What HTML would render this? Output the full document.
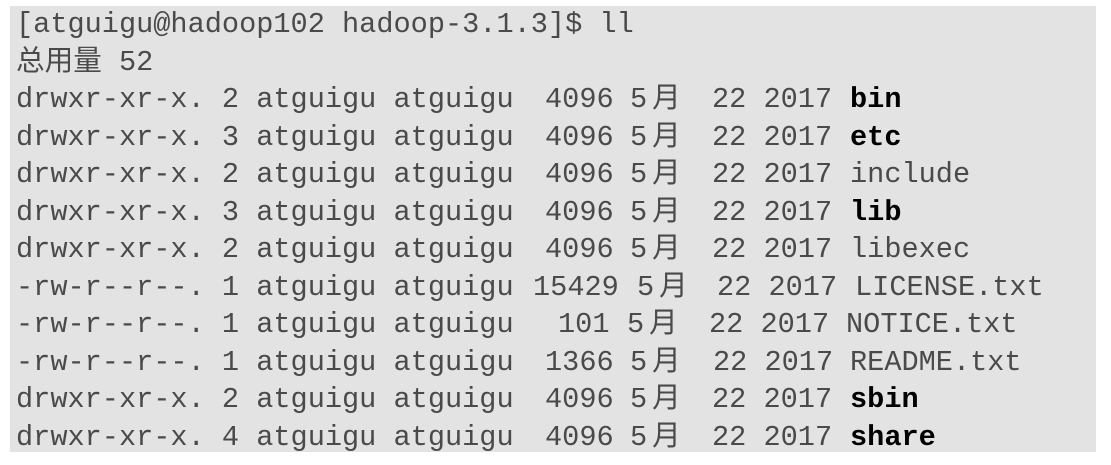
<!DOCTYPE html>
<html><head><meta charset="utf-8"><style>
html,body{margin:0;padding:0;background:#fff;width:1111px;height:465px;overflow:hidden}
#t{position:absolute;left:10px;top:6px;width:1086px;height:446px;background:#e3e3e3}
.l{position:absolute;left:0;height:38px;font-family:"Liberation Mono","Noto Sans CJK SC",monospace;font-size:28.6px;color:#4a4a4a;white-space:pre;line-height:38px}
.l span{position:absolute;top:0}
.l i{font-style:normal;margin-left:5px}
b{color:#000}
</style></head><body><div id="t">
<div class="l" style="top:0"><span style="left:6px">[atguigu@hadoop102 hadoop-3.1.3]$ ll</span></div>
<div class="l" style="top:38px"><span style="left:6px">总用量 52</span></div>

<div class="l" style="top:75px"><span style="left:6px">drwxr-xr-x. 2 atguigu atguigu</span><span style="left:535px">4096</span><span style="left:620px">5<i>月</i></span><span style="left:702px">22 2017</span><span style="left:840px"><b>bin</b></span></div>
<div class="l" style="top:113px"><span style="left:6px">drwxr-xr-x. 3 atguigu atguigu</span><span style="left:535px">4096</span><span style="left:620px">5<i>月</i></span><span style="left:702px">22 2017</span><span style="left:840px"><b>etc</b></span></div>
<div class="l" style="top:150px"><span style="left:6px">drwxr-xr-x. 2 atguigu atguigu</span><span style="left:535px">4096</span><span style="left:620px">5<i>月</i></span><span style="left:702px">22 2017</span><span style="left:840px">include</span></div>
<div class="l" style="top:188px"><span style="left:6px">drwxr-xr-x. 3 atguigu atguigu</span><span style="left:535px">4096</span><span style="left:620px">5<i>月</i></span><span style="left:702px">22 2017</span><span style="left:840px"><b>lib</b></span></div>
<div class="l" style="top:225px"><span style="left:6px">drwxr-xr-x. 2 atguigu atguigu</span><span style="left:535px">4096</span><span style="left:620px">5<i>月</i></span><span style="left:702px">22 2017</span><span style="left:840px">libexec</span></div>
<div class="l" style="top:263px"><span style="left:6px">-rw-r--r--. 1 atguigu atguigu</span><span style="left:523px">15429</span><span style="left:627px">5<i>月</i></span><span style="left:707px">22 2017</span><span style="left:845px">LICENSE.txt</span></div>
<div class="l" style="top:300px"><span style="left:6px">-rw-r--r--. 1 atguigu atguigu</span><span style="left:548px">101</span><span style="left:617px">5<i>月</i></span><span style="left:699px">22 2017</span><span style="left:836px">NOTICE.txt</span></div>
<div class="l" style="top:338px"><span style="left:6px">-rw-r--r--. 1 atguigu atguigu</span><span style="left:535px">1366</span><span style="left:620px">5<i>月</i></span><span style="left:703px">22 2017</span><span style="left:840px">README.txt</span></div>
<div class="l" style="top:375px"><span style="left:6px">drwxr-xr-x. 2 atguigu atguigu</span><span style="left:535px">4096</span><span style="left:620px">5<i>月</i></span><span style="left:702px">22 2017</span><span style="left:840px"><b>sbin</b></span></div>
<div class="l" style="top:413px"><span style="left:6px">drwxr-xr-x. 4 atguigu atguigu</span><span style="left:535px">4096</span><span style="left:620px">5<i>月</i></span><span style="left:702px">22 2017</span><span style="left:840px"><b>share</b></span></div>
</div></body></html>
